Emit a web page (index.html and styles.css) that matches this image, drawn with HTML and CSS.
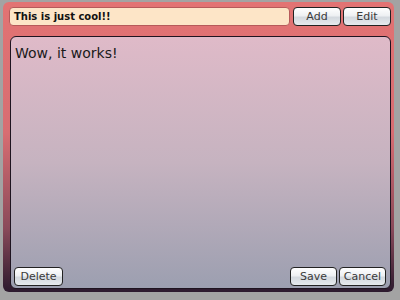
FILE: index.html
```html
<!DOCTYPE html>
<html lang="en">
<head>
  <meta charset="UTF-8">
  <title>Notes</title>
  <link rel="stylesheet" href="styles.css">
</head>
<body>
  <div class="frame">
    <div class="toolbar">
      <div class="field">This is just cool!!</div>
      <button class="btn">Add</button>
      <button class="btn">Edit</button>
    </div>
    <div class="panel">
      <div class="content">Wow, it works!</div>
      <div class="actions">
        <button class="btn">Delete</button>
        <span class="spacer"></span>
        <button class="btn">Save</button>
        <button class="btn">Cancel</button>
      </div>
    </div>
  </div>
</body>
</html>
```

FILE: styles.css
```css
html, body {
  margin: 0;
  height: 100%;
}
body {
  background: #a3a3a3;
  font-family: "DejaVu Sans", sans-serif;
  padding: 2px 6px 8px 3px;
  box-sizing: border-box;
}
.frame {
  height: 100%;
  border-radius: 6px;
  background: linear-gradient(#e27373 0%, #d86d72 45%, #8a4a5a 78%, #2c1a2e 100%);
  padding: 5px 3px 3px 6px;
  box-sizing: border-box;
  display: flex;
  flex-direction: column;
}
.toolbar {
  display: flex;
  gap: 2px;
  height: 19px;
  margin-bottom: 10px;
}
.field {
  flex: 1;
  background: #fde5c7;
  border: 1px solid #b65a5a;
  border-radius: 4px;
  font-size: 10px;
  font-weight: bold;
  line-height: 17px;
  padding: 0 4px;
  color: #111;
  margin-right: 1px;
}
.btn {
  font-family: "DejaVu Sans", sans-serif;
  font-size: 11px;
  color: #3a3a3a;
  height: 19px;
  padding: 0;
  min-width: 47px;
  border: 1px solid #222;
  border-radius: 4px;
  background: linear-gradient(#ffffff 0%, #eef0f3 45%, #d4d9df 55%, #e6eaee 100%);
}
.toolbar .btn {
  width: 48px;
}
.panel {
  flex: 1;
  margin-left: 1px;
  border: 1px solid #1e1420;
  border-radius: 6px;
  background: linear-gradient(#dfbac8 0%, #c6b3c0 50%, #9c9fb0 100%);
  display: flex;
  flex-direction: column;
  padding: 4px 4px 2px 3px;
}
.content {
  flex: 1;
  font-size: 14px;
  color: #1a1a1a;
  padding: 4px 0 0 1px;
}
.actions {
  display: flex;
  gap: 2px;
}
.spacer {
  flex: 1;
}
.actions .btn:first-child {
  min-width: 49px;
}
```
